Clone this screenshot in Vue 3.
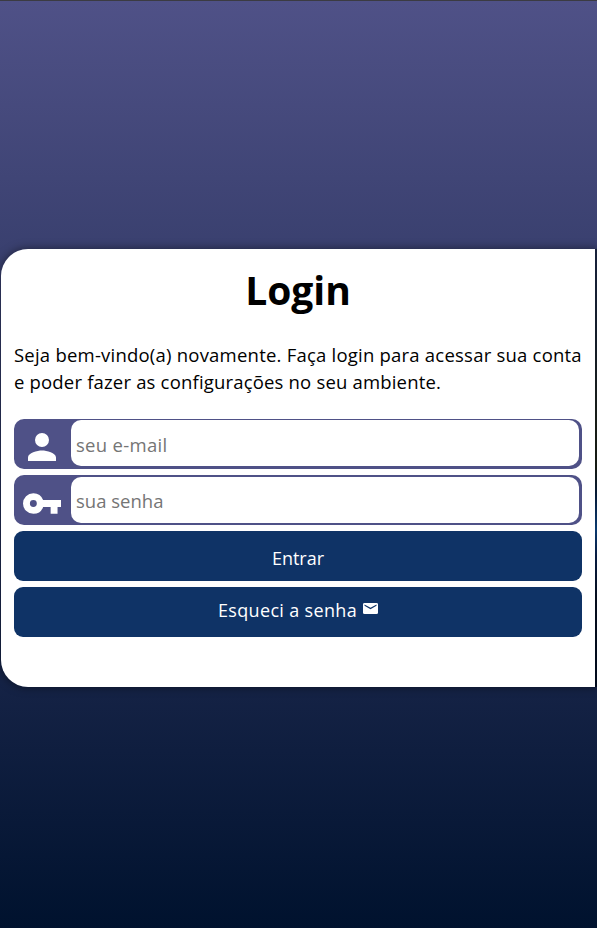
<script setup>
const fields = [
  { id: 'email', type: 'email', label: 'seu e-mail', icon: 'person' },
  { id: 'senha', type: 'password', label: 'sua senha', icon: 'key' },
]
</script>

<template>
  <main class="page">
    <div class="stage">
      <section class="card">
        <h1>Login</h1>
        <p class="intro">
          <span class="line first">Seja bem-vindo(a) novamente. Faça login para acessar sua conta</span>
          <span class="line second">e poder fazer as configurações no seu ambiente.</span>
        </p>
        <form class="form" @submit.prevent>
          <label v-for="f in fields" :key="f.id" class="field" :class="f.id">
            <span class="icon">
              <svg v-if="f.icon === 'person'" class="person" viewBox="0 0 16 16">
                <path d="M8 8a4 4 0 1 0 0-8 4 4 0 0 0 0 8Zm0 2c-2.67 0-8 1.34-8 4v2h16v-2c0-2.66-5.33-4-8-4Z" />
              </svg>
              <svg v-else class="key" viewBox="1 6 22 12">
                <path d="M12.65 10A6 6 0 0 0 7 6a6 6 0 0 0 0 12 6 6 0 0 0 5.65-4H17v4h4v-4h2v-4H12.65ZM7 14a2 2 0 1 1 0-4 2 2 0 0 1 0 4Z" />
              </svg>
            </span>
            <input :type="f.type" :placeholder="f.label" />
          </label>
          <button class="btn enter" type="submit"><span>Entrar</span></button>
          <a class="btn forgot">
            <span>Esqueci a senha</span>
            <svg class="mail" viewBox="2 4 20 16" preserveAspectRatio="none">
              <path d="M20 4H4a2 2 0 0 0-2 2v12a2 2 0 0 0 2 2h16a2 2 0 0 0 2-2V6a2 2 0 0 0-2-2Zm0 4-8 5-8-5V6l8 5 8-5v2Z" />
            </svg>
          </a>
        </form>
      </section>
      <div class="photo"></div>
    </div>
  </main>
</template>

<style>
body {
  margin: 0;
  overflow: hidden;
}
</style>

<style scoped>
* {
  box-sizing: border-box;
}
.page {
  height: 100vh;
  padding: 248px 0 0 1px;
  border-top: 1px solid #3b3b42;
  background: linear-gradient(#4f5187, #00122e);
  font-family: "Segoe UI", "Open Sans", "Noto Sans", sans-serif;
  color: #000;
}
.stage {
  display: flex;
  height: 438px;
  border-radius: 27px 0 0 27px;
  box-shadow: 0 0 10px rgba(0, 0, 0, 0.5);
}
.card {
  width: 594px;
  padding: 14px 13px 0;
  border-radius: 27px 0 0 27px;
  background: #fff;
}
.photo {
  flex: 1;
  background: linear-gradient(#17213b 0%, #141d29 20%, #181d17 40%, #151a13 50%, #061a36 56%, #0a3a70 64%, #071c42 70%, #050d1c 80%, #000a1c 100%);
}
h1 {
  margin: 0;
  font-size: 39px;
  line-height: 54px;
  font-weight: 700;
  text-align: center;
}
.intro {
  margin: 24px 0 0;
  font-size: 18.5px;
  line-height: 27px;
}
.line {
  display: block;
  white-space: nowrap;
}
.first {
  letter-spacing: 0.22px;
}
.second {
  letter-spacing: 0.18px;
}
.form {
  display: flex;
  flex-direction: column;
  gap: 6px;
  margin-top: 24px;
}
.field {
  display: flex;
  height: 50px;
  padding: 1px 3px 3px 0;
  border-radius: 10px;
  background: #4f5187;
}
.field.senha {
  padding: 2px 3px 2px 0;
}
.icon {
  display: flex;
  align-items: center;
  justify-content: center;
  width: 57px;
  flex: none;
}
svg {
  display: block;
  fill: #fff;
}
.person {
  width: 28px;
  height: 28px;
  margin: 8px 1px 0 0;
}
.key {
  width: 38px;
  height: 21px;
  margin: 6px 1px 0 0;
}
input {
  flex: 1;
  min-width: 0;
  padding: 2px 5px 0;
  border: 0;
  border-radius: 10px;
  outline: 0;
  background: #fff;
  font: 18.5px "Segoe UI", "Open Sans", "Noto Sans", sans-serif;
}
.email input {
  letter-spacing: 0.3px;
}
.senha input {
  padding-top: 0;
}
input::placeholder {
  color: #757575;
  opacity: 1;
}
.btn {
  display: flex;
  align-items: center;
  justify-content: center;
  gap: 6px;
  height: 50px;
  padding: 4px 0 0;
  border: 0;
  border-radius: 9px;
  background: #0f3366;
  color: #fff;
  font: 18px/26px "Segoe UI", "Open Sans", "Noto Sans", sans-serif;
}
.forgot {
  padding: 0 0 4px;
  letter-spacing: 0.33px;
}
.mail {
  width: 15px;
  height: 11px;
  margin-top: -3px;
}
</style>
